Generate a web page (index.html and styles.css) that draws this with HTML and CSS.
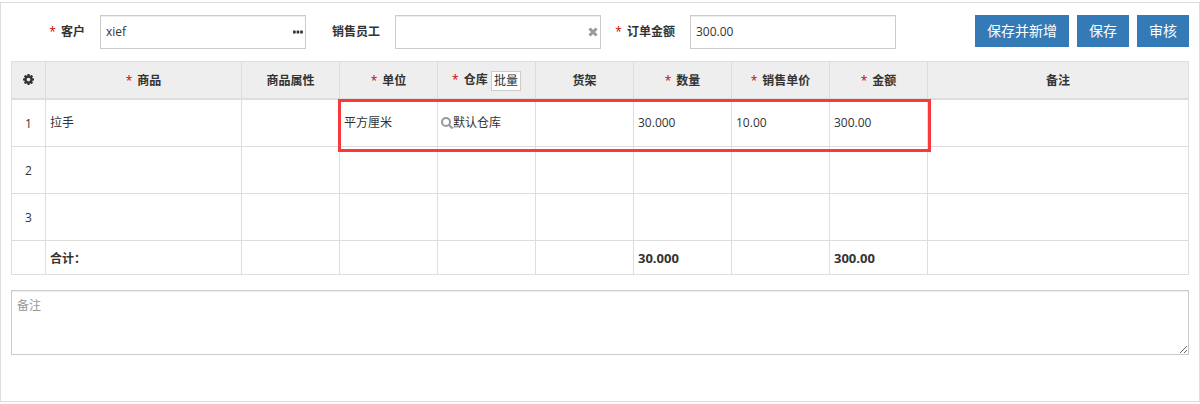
FILE: index.html
```html
<!DOCTYPE html>
<html lang="zh-CN">
<head>
    <meta charset="UTF-8">
    <meta name="viewport" content="width=device-width, initial-scale=1.0">
    <title>销售订单</title>
    <link rel="stylesheet" href="styles.css">
</head>
<body>
    <form class="panel">
        <div class="toolbar">
            <div class="fields">
                <label class="field-label" for="customer"><span class="required">*</span> 客户</label>
                <div class="input-box">
                    <input type="text" id="customer" value="xief">
                    <button type="button" class="icon-button" aria-label="选择客户">
                        <svg width="10" height="10" viewBox="0 0 10 10"><g fill="#333"><rect x="0" y="3.500" width="2.700" height="3" rx=".6"/><rect x="3.600" y="3.500" width="2.700" height="3" rx=".6"/><rect x="7.200" y="3.500" width="2.700" height="3" rx=".6"/></g></svg>
                    </button>
                </div>
                <label class="field-label" for="staff">销售员工</label>
                <div class="input-box">
                    <input type="text" id="staff">
                    <button type="button" class="icon-button" aria-label="清除">
                        <svg width="10" height="10" viewBox="0 0 10 10"><path stroke="#999" stroke-width="3" d="M1.500 1.500l7 7M8.500 1.500l-7 7"/></svg>
                    </button>
                </div>
                <label class="field-label" for="amount"><span class="required">*</span> 订单金额</label>
                <div class="input-box">
                    <input type="text" id="amount" value="300.00">
                </div>
            </div>
            <div class="actions">
                <button type="button" class="btn">保存并新增</button>
                <button type="button" class="btn">保存</button>
                <button type="button" class="btn">审核</button>
            </div>
        </div>

        <table class="items">
            <colgroup>
                <col class="col-index">
                <col class="col-product">
                <col class="col-data" span="7">
                <col>
            </colgroup>
            <thead>
                <tr>
                    <th>
                        <button type="button" class="icon-button" aria-label="设置">
                            <svg width="11" height="11" viewBox="0 0 1536 1536"><path fill="#333" d="M1024 768q0-106-75-181t-181-75-181 75-75 181 75 181 181 75 181-75 75-181zm512-109v222q0 12-8 23t-20 13l-185 28q-19 54-39 91 35 50 107 138 10 12 10 25t-9 23q-27 37-99 108t-94 71q-12 0-26-9l-138-108q-44 23-91 38-16 136-29 186-7 28-36 28H657q-14 0-24.500-8.500T621 1506l-28-184q-49-16-90-37l-141 107q-10 9-25 9-14 0-25-11-126-114-165-168-7-10-7-23 0-12 8-23 15-21 51-66.500t54-70.500q-27-50-41-99L29 913q-13-2-21-12.500T0 877V655q0-12 8-23t19-13l186-28q14-46 39-92-40-57-107-138-10-12-10-24 0-10 9-23 26-36 98.500-107.500T337 135q13 0 26 10l138 107q44-23 91-38 16-136 29-186 7-28 36-28h222q14 0 24.500 8.500T915 30l28 184q49 16 90 37l142-107q9-9 24-9 13 0 25 10 129 119 165 170 7 8 7 22 0 12-8 23-15 21-51 66.500t-54 70.500q26 50 41 98l183 28q13 2 21 12.500t8 23.500z"/></svg>
                        </button>
                    </th>
                    <th><span class="required">*</span> 商品</th>
                    <th>商品属性</th>
                    <th><span class="required">*</span> 单位</th>
                    <th><span class="required">*</span> 仓库 <button type="button" class="batch">批量</button></th>
                    <th>货架</th>
                    <th><span class="required">*</span> 数量</th>
                    <th><span class="required">*</span> 销售单价</th>
                    <th><span class="required">*</span> 金额</th>
                    <th>备注</th>
                </tr>
            </thead>
            <tbody>
                <tr>
                    <td class="index">1</td>
                    <td>拉手</td>
                    <td></td>
                    <td class="marked">平方厘米</td>
                    <td class="lookup-cell">
                        <div class="lookup">
                            <svg width="12" height="12" viewBox="0 0 12 12"><circle cx="5" cy="5" r="4" fill="none" stroke="#999" stroke-width="2"/><path stroke="#999" stroke-width="2" d="M8 8l3.500 3.500"/></svg>
                            <span>默认仓库</span>
                        </div>
                    </td>
                    <td></td>
                    <td>30.000</td>
                    <td>10.00</td>
                    <td>300.00</td>
                    <td></td>
                </tr>
                <tr>
                    <td class="index">2</td>
                    <td></td><td></td><td></td><td></td><td></td><td></td><td></td><td></td><td></td>
                </tr>
                <tr>
                    <td class="index">3</td>
                    <td></td><td></td><td></td><td></td><td></td><td></td><td></td><td></td><td></td>
                </tr>
            </tbody>
            <tfoot>
                <tr>
                    <td></td>
                    <td class="total-label">合计：</td>
                    <td></td>
                    <td></td>
                    <td></td>
                    <td></td>
                    <td class="total">30.000</td>
                    <td></td>
                    <td class="total">300.00</td>
                    <td></td>
                </tr>
            </tfoot>
        </table>

        <textarea class="remark" placeholder="备注" aria-label="备注"></textarea>
    </form>
</body>
</html>
```
FILE: styles.css
```css
* {
    box-sizing: border-box;
}
body {
    margin: 2px 0;
    background: #fff;
    color: #333;
    font-family: "Open Sans", "Noto Sans CJK SC", sans-serif;
    font-size: 12px;
    line-height: 18px;
}
input, button, textarea {
    font: inherit;
    color: inherit;
}
.panel {
    border: 1px solid #ddd;
    padding: 12px 10px 46px;
}
.toolbar {
    display: flex;
    justify-content: space-between;
    align-items: flex-start;
    margin-bottom: 12px;
}
.fields {
    display: flex;
    align-items: center;
}
.field-label {
    width: 89px;
    padding-right: 15px;
    text-align: right;
    font-weight: bold;
    white-space: nowrap;
}
.required {
    margin-right: 2px;
    color: #c00;
    font-weight: normal;
}
.input-box {
    display: flex;
    align-items: center;
    width: 206px;
    height: 34px;
    padding: 0 2px 0 5px;
    border: 1px solid #ccc;
    box-shadow: inset 0 1px 1px rgba(0, 0, 0, 0.075);
}
.input-box input {
    flex: 1;
    min-width: 0;
    padding: 0;
    border: none;
    outline: none;
    background: transparent;
}
.icon-button {
    padding: 0;
    border: none;
    background: none;
    cursor: pointer;
}
.icon-button svg {
    display: block;
}
.actions {
    display: flex;
    gap: 8px;
}
.btn {
    height: 32px;
    padding: 0 12px;
    border: none;
    background: #337ab7;
    color: #fff;
    font-size: 14px;
    white-space: nowrap;
    cursor: pointer;
}
.btn:hover {
    background: #286090;
}

/* Order lines */
.items {
    width: 100%;
    table-layout: fixed;
    border-collapse: collapse;
}
.col-index {
    width: 34px;
}
.col-product {
    width: 196px;
}
.col-data {
    width: 98px;
}
.items th, .items td {
    border: 1px solid #ddd;
    padding: 0 4px;
    text-align: left;
    white-space: nowrap;
}
.items th {
    height: 37px;
    padding: 3px 0 0;
    border-bottom-width: 2px;
    background: #eee;
    text-align: center;
}
.items tbody td {
    height: 47px;
}
.items tbody tr:first-child td {
    height: 48px;
}
.items tfoot td {
    height: 34px;
    font-weight: bold;
}
.items .index {
    padding: 2px 0 0;
    text-align: center;
}
.items .total {
    font-size: 13px;
}
/* TC form centres the full-width colon */
.items .total-label {
    font-family: "Noto Sans CJK TC", sans-serif;
}
.batch {
    height: 20px;
    padding: 0 2px;
    border: 1px solid #ccc;
    background: #fff;
    font-weight: normal;
    line-height: 18px;
    vertical-align: middle;
    cursor: pointer;
}
.items .lookup-cell {
    padding-left: 3px;
}
.lookup {
    display: flex;
    align-items: center;
}

/* Red frame from the unit to the amount column */
.marked {
    position: relative;
}
.marked::after {
    content: "";
    position: absolute;
    top: -1px;
    left: -2px;
    box-sizing: border-box;
    width: calc(600% + 11px);
    height: 53px;
    border: 3px solid #f93a3a;
    pointer-events: none;
}

.remark {
    display: block;
    width: 100%;
    height: 65px;
    margin-top: 15px;
    padding: 6px 5px;
    border: 1px solid #ccc;
    box-shadow: inset 0 1px 1px rgba(0, 0, 0, 0.075);
    outline: none;
    resize: vertical;
}
.remark::placeholder {
    color: #999;
}
```
